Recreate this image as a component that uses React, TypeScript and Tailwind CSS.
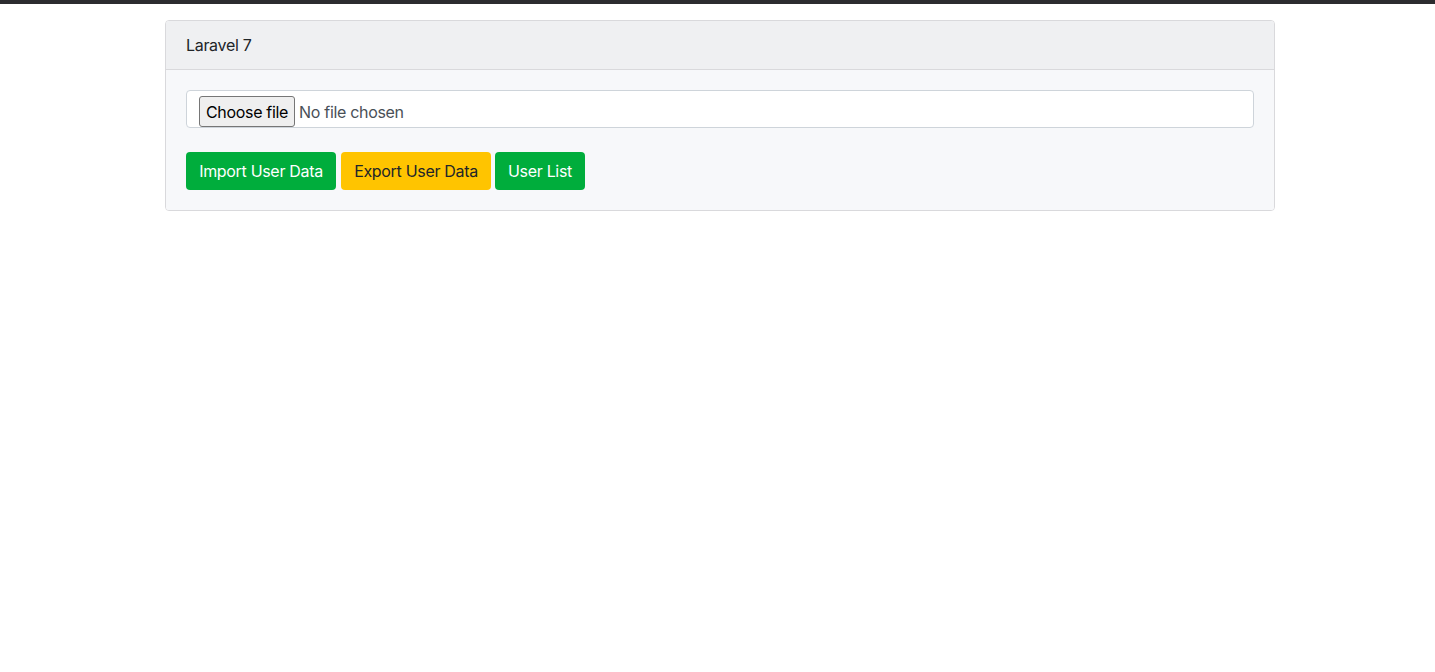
export default function App() {
  return (
    <div className="min-h-screen bg-white text-[#212529] font-['Inter','Liberation_Sans',sans-serif] tracking-[-0.02em]">
      {/* top window strip */}
      <div className="h-[4px] bg-[#2c2c2f]" />

      <div className="w-[1110px] ml-[165px] mt-[16px]">
        <div className="border border-[#d9d9dc] rounded-[4px] overflow-hidden">
          {/* card header */}
          <div className="h-[49px] px-[20px] flex items-center bg-[#eff0f2] border-b border-[#d9d9dc] text-[16px]">
            Laravel 7
          </div>

          {/* card body */}
          <div className="bg-[#f7f8fa] p-[20px]">
            <div className="h-[38px] bg-white border border-[#ced4da] rounded-[4px] flex items-start pt-[5px] px-[12px]">
              <button className="h-[31px] px-[6px] bg-[#efefef] border border-[#767676] rounded-[3px] text-[16px] text-black leading-none">
                Choose file
              </button>
              <span className="ml-[4px] h-[31px] flex items-center text-[16px] text-[#495057]">No file chosen</span>
            </div>

            <div className="flex mt-[24px]">
              <button className="h-[38px] w-[150px] rounded-[4px] bg-[#00ad3c] text-white text-[16px]">
                Import User Data
              </button>
              <button className="ml-[5px] h-[38px] w-[150px] rounded-[4px] bg-[#ffc400] text-[#212529] text-[16px]">
                Export User Data
              </button>
              <button className="ml-[4px] h-[38px] w-[90px] rounded-[4px] bg-[#00ad3c] text-white text-[16px]">
                User List
              </button>
            </div>
          </div>
        </div>
      </div>
    </div>
  );
}
